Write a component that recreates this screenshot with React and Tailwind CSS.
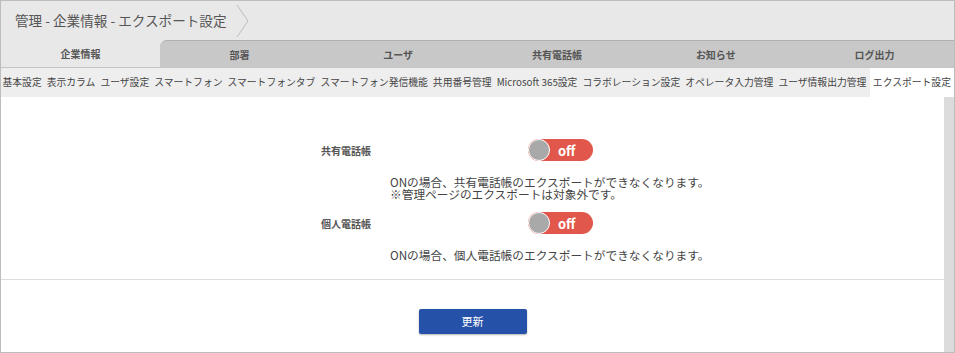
const tabs = ['企業情報', '部署', 'ユーザ', '共有電話帳', 'お知らせ', 'ログ出力'];

const subMenu = [
  '基本設定',
  '表示カラム',
  'ユーザ設定',
  'スマートフォン',
  'スマートフォンタブ',
  'スマートフォン発信機能',
  '共用番号管理',
  'Microsoft 365設定',
  'コラボレーション設定',
  'オペレータ入力管理',
  'ユーザ情報出力管理',
  'エクスポート設定',
];

function OffToggle() {
  return (
    <div className="relative w-[65px] h-[22px] rounded-full bg-[#e2574c] flex items-center">
      <div className="absolute left-0 top-0 w-[22px] h-[22px] rounded-full bg-[#a9a9a9] border-[1.5px] border-white" />
      <span className="ml-[30px] text-[13px] font-bold text-white leading-none">off</span>
    </div>
  );
}

export default function App() {
  return (
    <div
      className="w-[955px] h-[353px] flex flex-col border border-[#bdbdbd] overflow-hidden text-[#444]"
      style={{ fontFamily: '"Noto Sans CJK JP", "Noto Sans", sans-serif' }}
    >
      {/* Header */}
      <div className="h-[39px] bg-[#e8e8e8] flex items-center pl-[14px]">
        <span className="text-[13.6px] text-[#555]">管理 - 企業情報 - エクスポート設定</span>
        <svg width="14" height="34" viewBox="0 0 14 34" className="ml-[9px]">
          <path d="M1 1 L12 17 L1 33" fill="none" stroke="#bdbdbd" strokeWidth="1" />
        </svg>
      </div>

      {/* Main tabs */}
      <div className="h-[28px] flex bg-[#e8e8e8] border-b border-[#c4c4c4]">
        {tabs.map((t, i) => (
          <div
            key={t}
            className={
              i === 0
                ? 'w-[159px] flex items-center justify-center text-[10px] font-bold text-[#555]'
                : i === 1
                ? 'flex-1 flex items-center justify-center text-[10px] font-bold text-[#555] bg-[#c8c8c8] border-t border-[#b0b0b0] rounded-tl-[7px]'
                : 'flex-1 flex items-center justify-center text-[10px] font-bold text-[#555] bg-[#c8c8c8] border-t border-[#b0b0b0]'
            }
          >
            {t}
          </div>
        ))}
      </div>

      {/* Sub menu */}
      <div className="h-[29px] flex items-center bg-[#eeeeee] text-[9.8px] text-[#444] whitespace-nowrap">
        {subMenu.map((m, i) => (
          <span
            key={m}
            className={
              i === subMenu.length - 1
                ? 'h-full flex items-center pl-[3px] pr-[3px] bg-white'
                : 'h-full flex items-center pl-[1.5px] pr-[3.5px]'
            }
          >
            {m}
          </span>
        ))}
      </div>

      {/* Content */}
      <div className="flex-1 flex">
        <div className="flex-1 bg-white flex flex-col">
          <div className="pt-[42px] pl-[320px]">
            <div className="grid grid-cols-[69px_341px]">
              <div className="h-[22px] flex items-center text-[10px] font-bold text-[#555]">共有電話帳</div>
              <div className="flex justify-center">
                <OffToggle />
              </div>
              <div />
              <div className="mt-[15px] text-[11.7px] leading-[12px] text-[#444] whitespace-nowrap">
                <div>ONの場合、共有電話帳のエクスポートができなくなります。</div>
                <div>※管理ページのエクスポートは対象外です。</div>
              </div>

              <div className="mt-[12px] h-[22px] flex items-center text-[10px] font-bold text-[#555]">個人電話帳</div>
              <div className="mt-[12px] flex justify-center">
                <OffToggle />
              </div>
              <div />
              <div className="mt-[15px] text-[11.7px] leading-[12px] text-[#444] whitespace-nowrap">
                ONの場合、個人電話帳のエクスポートができなくなります。
              </div>
            </div>
          </div>

          <div className="mt-[18px] border-t border-[#dddddd]" />

          <div className="flex justify-center pt-[29px]">
            <button className="w-[108px] h-[25px] bg-[#2651a9] text-white text-[11px] rounded-[2px] shadow-[0_1px_2px_rgba(0,0,0,0.3)]">
              更新
            </button>
          </div>
        </div>
        <div className="w-[10px] bg-[#dcdcdc]" />
      </div>
    </div>
  );
}
